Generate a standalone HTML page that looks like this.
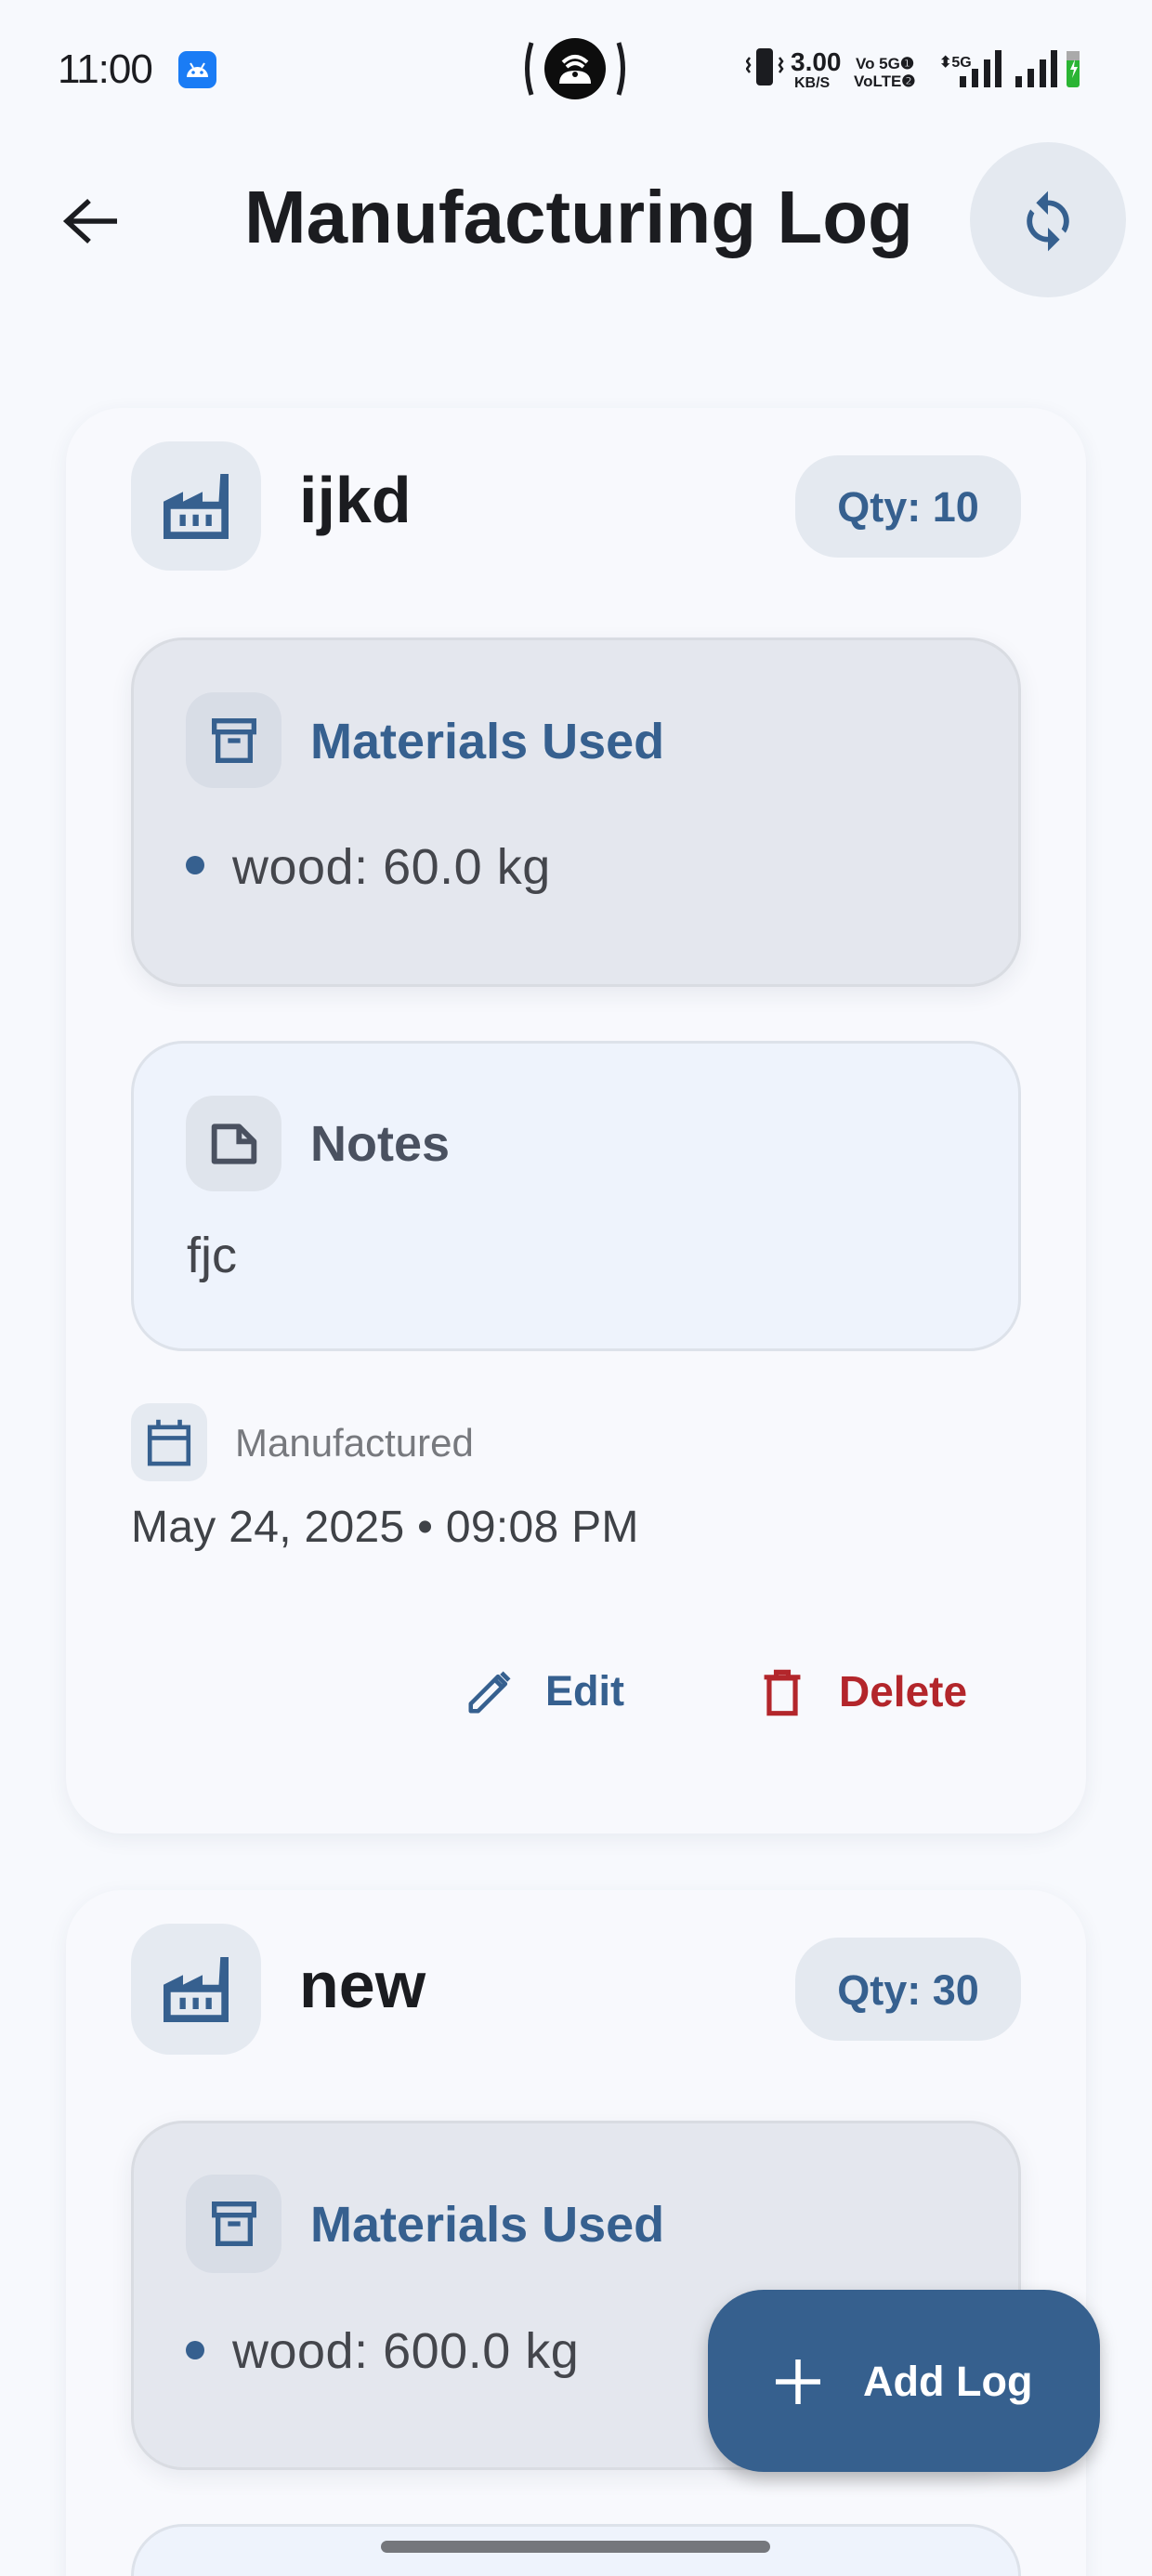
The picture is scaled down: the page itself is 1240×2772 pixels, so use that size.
<!DOCTYPE html>
<html><head><meta charset="utf-8">
<style>
*{margin:0;padding:0;box-sizing:border-box}
html,body{width:1240px;height:2772px;overflow:hidden}
body{background:#f7f9fd;font-family:"Liberation Sans",sans-serif;color:#1b1c20}
#w{position:relative;width:1240px;height:2772px;overflow:hidden}
.a{position:absolute}
.card{position:absolute;left:71px;width:1098px;border-radius:60px;background:#f8f9fd;box-shadow:0 6px 22px rgba(40,50,80,0.07)}
.tile{position:absolute;background:#e5eaf1;display:flex;align-items:center;justify-content:center}
.mat{position:absolute;left:141px;width:958px;background:#e4e7ee;border:3px solid #d9dce2;border-radius:56px;box-shadow:0 8px 24px rgba(40,50,80,0.08)}
.notes{position:absolute;left:141px;width:958px;background:#eef3fc;border:3px solid #dde2ea;border-radius:56px}
.t{position:absolute;white-space:nowrap;line-height:1}
</style></head><body><div id="w">

<!-- status bar -->
<div class="t" style="left:62px;top:53px;font-size:44px;color:#1b1c20;letter-spacing:-1px">11:00</div>
<div class="a" style="left:192px;top:55px;width:41px;height:40px;background:#1a7cf5;border-radius:9px">
<svg width="41" height="40" viewBox="0 0 41 40"><path d="M9 28a11.5 11 0 0 1 23 0Z" fill="#fff"/><circle cx="16" cy="23" r="1.8" fill="#1a7cf5"/><circle cx="25" cy="23" r="1.8" fill="#1a7cf5"/><path d="M13 13l3 5M28 13l-3 5" stroke="#fff" stroke-width="2"/></svg></div>
<svg class="a" style="left:562px;top:40px" width="114" height="68" viewBox="0 0 114 68"><path d="M10 6Q1 34 10 62M104 6Q113 34 104 62" stroke="#1b1c20" stroke-width="5" fill="none"/><circle cx="57" cy="34" r="33" fill="#0d0d0d"/><path d="M40 50q0-14 17-14t17 14Z" fill="#fff"/><path d="M44 27q13-12 26 0M48 32q9-8 18 0" stroke="#fff" stroke-width="4" fill="none"/><circle cx="57" cy="40" r="3" fill="#0d0d0d"/></svg>
<svg class="a" style="left:803px;top:50px" width="360" height="50" viewBox="0 0 360 50">
<rect x="11" y="2" width="18" height="40" rx="4" fill="#1b1c20"/><path d="M4 12l-3 4 3 4-3 4 3 4M36 12l3 4-3 4 3 4-3 4" stroke="#1b1c20" stroke-width="2.5" fill="none"/>
<text x="48" y="26" font-family="Liberation Sans" font-weight="bold" font-size="28" fill="#1b1c20">3.00</text>
<text x="52" y="44" font-family="Liberation Sans" font-weight="bold" font-size="16" fill="#1b1c20">KB/S</text>
<text x="118" y="24" font-family="Liberation Sans" font-weight="bold" font-size="17" fill="#1b1c20">Vo 5G❶</text>
<text x="116" y="43" font-family="Liberation Sans" font-weight="bold" font-size="17" fill="#1b1c20">VoLTE❷</text>
<text x="208" y="22" font-family="Liberation Sans" font-weight="bold" font-size="16" fill="#1b1c20">⬍5G</text>
<rect x="230" y="32" width="7" height="12" fill="#1b1c20"/><rect x="243" y="24" width="7" height="20" fill="#1b1c20"/><rect x="256" y="14" width="7" height="30" fill="#1b1c20"/><rect x="268" y="4" width="7" height="40" fill="#1b1c20"/>
<rect x="290" y="32" width="7" height="12" fill="#1b1c20"/><rect x="303" y="24" width="7" height="20" fill="#1b1c20"/><rect x="316" y="14" width="7" height="30" fill="#1b1c20"/><rect x="328" y="4" width="7" height="40" fill="#1b1c20"/>
<rect x="345" y="5" width="14" height="39" rx="3" fill="#2bb534"/><rect x="345" y="5" width="14" height="10" fill="#aaa"/><path d="M354 14l-5 11h4l-2 9 6-12h-4z" fill="#fff"/></svg>

<!-- app bar -->
<svg class="a" style="left:64px;top:208px" width="66" height="60" viewBox="0 0 66 60"><path d="M62 30H10M32 8L8 30l24 22" stroke="#1b1c20" stroke-width="5.5" fill="none"/></svg>
<div class="t" style="left:263px;top:194px;font-size:80px;font-weight:bold;color:#1b1c20">Manufacturing Log</div>
<div class="a" style="left:1044px;top:153px;width:168px;height:167px;border-radius:50%;background:#e4e9f0"></div>
<svg class="a" style="left:1094px;top:200px" width="68" height="76" viewBox="0 0 24 27"><path d="M12 5.5V2l-4.5 4.5L12 11V7.5a6 6 0 0 1 5.2 9l1.5 1.5A8 8 0 0 0 12 5.5ZM12 19.5a6 6 0 0 1-5.2-9L5.3 9A8 8 0 0 0 12 21.5V25l4.5-4.5L12 16Z" fill="#36608f"/></svg>

<!-- CARD 1 -->
<div class="card" style="top:439px;height:1534px"></div>
<div class="tile" style="left:141px;top:475px;width:140px;height:139px;border-radius:42px">
<svg width="84" height="84" viewBox="0 0 24 24"><path fill="#36608f" fill-rule="evenodd" d="M2 22V10.5l6-3v3l6-3v3h5L19.5 2H22v20ZM4.2 19.8h15.6V12.8H4.2Z"/><rect x="7" y="14.5" width="1.8" height="3.5" fill="#36608f"/><rect x="11" y="14.5" width="1.8" height="3.5" fill="#36608f"/><rect x="15" y="14.5" width="1.8" height="3.5" fill="#36608f"/></svg></div>
<div class="t" style="left:322px;top:503px;font-size:70px;font-weight:bold">ijkd</div>
<div class="a" style="left:856px;top:490px;width:243px;height:110px;border-radius:46px;background:#e4e9f0"></div>
<div class="t" style="left:856px;width:243px;text-align:center;top:523px;font-size:45px;font-weight:bold;color:#36608f">Qty: 10</div>

<div class="mat" style="top:686px;height:376px"></div>
<div class="tile" style="left:200px;top:745px;width:103px;height:103px;border-radius:30px;background:#d8dde6">
<svg width="64" height="64" viewBox="0 0 24 24"><path d="M4 4h16v4.5H4ZM5.5 8.5h13V20h-13ZM9.5 12h5" stroke="#36608f" stroke-width="2" fill="none"/></svg></div>
<div class="t" style="left:334px;top:771px;font-size:54px;font-weight:bold;color:#36608f">Materials Used</div>
<div class="a" style="left:200px;top:921px;width:20px;height:20px;border-radius:50%;background:#36608f"></div>
<div class="t" style="left:250px;top:906px;font-size:54px;color:#44464c;letter-spacing:0.5px">wood: 60.0 kg</div>

<div class="notes" style="top:1120px;height:334px"></div>
<div class="tile" style="left:200px;top:1179px;width:103px;height:103px;border-radius:30px;background:#dfe4ec">
<svg width="64" height="64" viewBox="0 0 24 24"><path d="M4 5h10l6 6v8H4Z" stroke="#4a5160" stroke-width="2.2" fill="none" stroke-linejoin="round"/><path d="M14 5v6h6" stroke="#4a5160" stroke-width="2.2" fill="none"/></svg></div>
<div class="t" style="left:334px;top:1204px;font-size:54px;font-weight:bold;color:#4a5160">Notes</div>
<div class="t" style="left:201px;top:1324px;font-size:54px;color:#44464c">fjc</div>

<div class="tile" style="left:141px;top:1510px;width:82px;height:84px;border-radius:20px">
<svg width="56" height="60" viewBox="0 0 24 26"><path d="M3 6h18v17H3ZM3 11h18M7 2.5v4M17 2.5v4" stroke="#36608f" stroke-width="2" fill="none"/></svg></div>
<div class="t" style="left:253px;top:1532px;font-size:42px;color:#77797e">Manufactured</div>
<div class="t" style="left:141px;top:1620px;font-size:48px;color:#3f4247;letter-spacing:0.3px">May 24, 2025 • 09:08 PM</div>

<svg class="a" style="left:500px;top:1794px" width="54" height="54" viewBox="0 0 24 24"><path d="M3 21v-3.5L16 4.5 19.5 8 6.5 21ZM14.5 6l3.5 3.5" stroke="#36608f" stroke-width="2" fill="none" stroke-linejoin="round"/><path d="M17 3.5l1.5-1.5 3.5 3.5L20.5 7Z" fill="#36608f"/></svg>
<div class="t" style="left:587px;top:1797px;font-size:45px;font-weight:bold;color:#36608f">Edit</div>
<svg class="a" style="left:816px;top:1794px" width="52" height="54" viewBox="0 0 24 25"><path d="M3 5h18M9 5V2.5h6V5M5.5 5.5h13V23h-13Z" stroke="#b3262b" stroke-width="2.4" fill="none"/></svg>
<div class="t" style="left:903px;top:1797px;font-size:46px;font-weight:bold;color:#b3262b">Delete</div>

<!-- CARD 2 -->
<div class="card" style="top:2034px;height:800px"></div>
<div class="tile" style="left:141px;top:2070px;width:140px;height:141px;border-radius:42px">
<svg width="84" height="84" viewBox="0 0 24 24"><path fill="#36608f" fill-rule="evenodd" d="M2 22V10.5l6-3v3l6-3v3h5L19.5 2H22v20ZM4.2 19.8h15.6V12.8H4.2Z"/><rect x="7" y="14.5" width="1.8" height="3.5" fill="#36608f"/><rect x="11" y="14.5" width="1.8" height="3.5" fill="#36608f"/><rect x="15" y="14.5" width="1.8" height="3.5" fill="#36608f"/></svg></div>
<div class="t" style="left:322px;top:2101px;font-size:70px;font-weight:bold">new</div>
<div class="a" style="left:856px;top:2085px;width:243px;height:111px;border-radius:46px;background:#e4e9f0"></div>
<div class="t" style="left:856px;width:243px;text-align:center;top:2119px;font-size:45px;font-weight:bold;color:#36608f">Qty: 30</div>

<div class="mat" style="top:2282px;height:376px"></div>
<div class="tile" style="left:200px;top:2340px;width:103px;height:106px;border-radius:30px;background:#d8dde6">
<svg width="64" height="64" viewBox="0 0 24 24"><path d="M4 4h16v4.5H4ZM5.5 8.5h13V20h-13ZM9.5 12h5" stroke="#36608f" stroke-width="2" fill="none"/></svg></div>
<div class="t" style="left:334px;top:2367px;font-size:54px;font-weight:bold;color:#36608f">Materials Used</div>
<div class="a" style="left:200px;top:2519px;width:20px;height:20px;border-radius:50%;background:#36608f"></div>
<div class="t" style="left:250px;top:2503px;font-size:54px;color:#44464c;letter-spacing:0.5px">wood: 600.0 kg</div>

<div class="notes" style="top:2716px;height:120px"></div>

<!-- FAB -->
<div class="a" style="left:762px;top:2464px;width:422px;height:196px;border-radius:60px;background:#36608e;box-shadow:0 8px 18px rgba(0,0,0,0.25)"></div>
<svg class="a" style="left:832px;top:2536px" width="54" height="54" viewBox="0 0 54 54"><path d="M27 3v48M3 27h48" stroke="#fff" stroke-width="5.5"/></svg>
<div class="t" style="left:929px;top:2540px;font-size:45px;font-weight:bold;color:#fff">Add Log</div>

<div class="a" style="left:410px;top:2734px;width:419px;height:13px;border-radius:7px;background:#75777c"></div>
</div></body></html>
